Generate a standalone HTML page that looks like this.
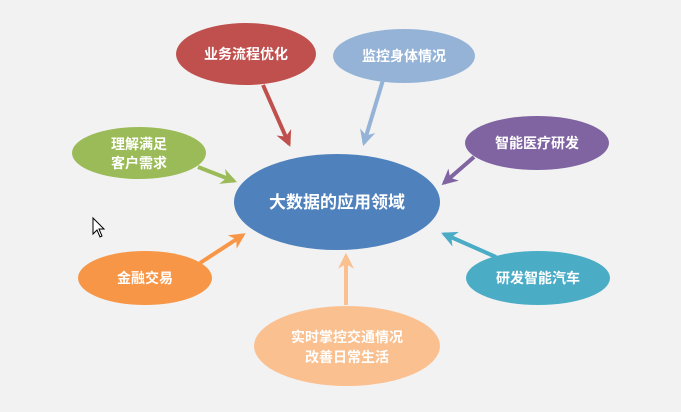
<!DOCTYPE html><html><head><meta charset="utf-8"><style>
body{margin:0;background:#f2f2f2;width:681px;height:407px;overflow:hidden}
svg text{font-family:"Liberation Sans","Noto Sans CJK SC",sans-serif;font-weight:bold;fill:#fff;text-anchor:middle}
</style></head><body>
<svg width="681" height="407" viewBox="0 0 681 407">
<defs>
<marker id="m" viewBox="0 0 10 10" refX="8" refY="5" markerWidth="4" markerHeight="4" orient="auto-start-reverse"><path d="M0,0 L10,5 L0,10 L3,5 Z" fill="context-stroke"/></marker>
</defs>
<g stroke-width="4" fill="none">
<line x1="263" y1="85" x2="289" y2="144" stroke="#c0504d" marker-end="url(#m)"/>
<line x1="383" y1="80" x2="364" y2="143" stroke="#95b3d7" marker-end="url(#m)"/>
<line x1="198" y1="167" x2="234" y2="181" stroke="#9bbb59" marker-end="url(#m)"/>
<line x1="474" y1="157" x2="444" y2="183" stroke="#8064a2" marker-end="url(#m)"/>
<line x1="200" y1="263" x2="243" y2="235" stroke="#f79646" marker-end="url(#m)"/>
<line x1="496" y1="257" x2="444" y2="234" stroke="#4bacc6" marker-end="url(#m)"/>
<line x1="346" y1="305" x2="346" y2="256" stroke="#fac090" marker-end="url(#m)"/>
</g>
<ellipse cx="337" cy="202" rx="103" ry="48" fill="#4f81bd"/>
<ellipse cx="246" cy="54" rx="70" ry="31" fill="#c0504d"/>
<ellipse cx="404" cy="56" rx="71" ry="27" fill="#95b3d7"/>
<ellipse cx="139" cy="153" rx="67" ry="26" fill="#9bbb59"/>
<ellipse cx="537" cy="143" rx="72" ry="27" fill="#8064a2"/>
<ellipse cx="145" cy="278" rx="67" ry="27" fill="#f79646"/>
<ellipse cx="538" cy="278" rx="72" ry="27" fill="#4bacc6"/>
<ellipse cx="347" cy="346" rx="93" ry="40" fill="#fac090"/>
<text x="337" y="208" font-size="17">大数据的应用领域</text>
<text x="246" y="59" font-size="14">业务流程优化</text>
<text x="404" y="61" font-size="14">监控身体情况</text>
<text x="139" y="149" font-size="14">理解满足</text>
<text x="139" y="168" font-size="14">客户需求</text>
<text x="537" y="148" font-size="14">智能医疗研发</text>
<text x="145" y="283" font-size="14">金融交易</text>
<text x="538" y="283" font-size="14">研发智能汽车</text>
<text x="347" y="342" font-size="14">实时掌控交通情况</text>
<text x="347" y="362" font-size="14">改善日常生活</text>
<path d="M93,218 L93,234 L97,230 L100,237 L102,236 L99,229 L104,229 Z" fill="#fff" stroke="#000" stroke-width="1"/>
</svg>
</body></html>
